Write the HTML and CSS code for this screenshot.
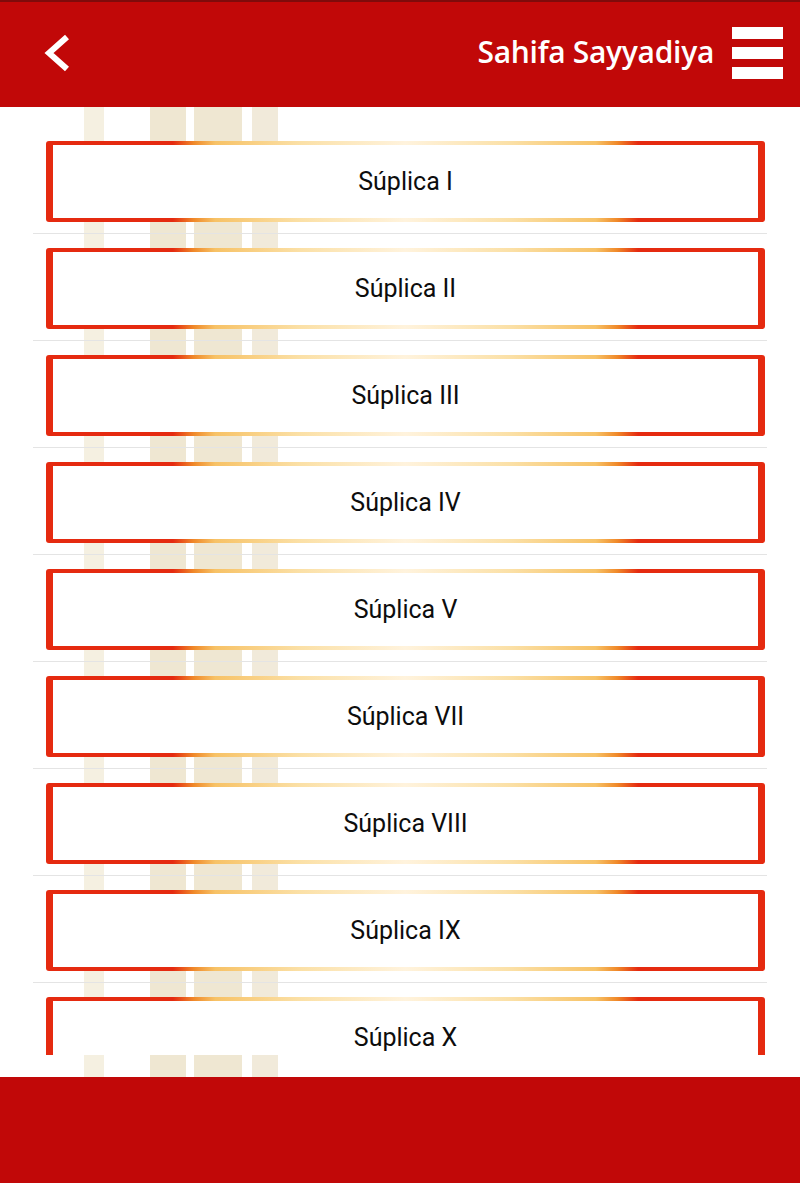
FILE: index.html
```html
<!DOCTYPE html>
<html lang="es">
<head>
    <meta charset="UTF-8">
    <meta name="viewport" content="width=device-width, initial-scale=1.0">
    <title>Sahifa Sayyadiya</title>
    <link rel="stylesheet" href="styles.css">
</head>
<body>
    <header class="app-bar">
        <a class="back-btn" href="#">
            <svg width="28" height="40" viewBox="0 0 28 40">
                <polyline points="23,4 5,20 23,36" fill="none" stroke="#fff" stroke-width="6"/>
            </svg>
        </a>
        <h1 class="app-title">Sahifa Sayyadiya</h1>
        <a class="menu-btn" href="#">
            <span></span>
            <span></span>
            <span></span>
        </a>
    </header>

    <main class="content">
        <ul class="chapter-list">
            <li class="chapter-row"><a class="chapter-card" href="#">Súplica I</a></li>
            <li class="chapter-row"><a class="chapter-card" href="#">Súplica II</a></li>
            <li class="chapter-row"><a class="chapter-card" href="#">Súplica III</a></li>
            <li class="chapter-row"><a class="chapter-card" href="#">Súplica IV</a></li>
            <li class="chapter-row"><a class="chapter-card" href="#">Súplica V</a></li>
            <li class="chapter-row"><a class="chapter-card" href="#">Súplica VII</a></li>
            <li class="chapter-row"><a class="chapter-card" href="#">Súplica VIII</a></li>
            <li class="chapter-row"><a class="chapter-card" href="#">Súplica IX</a></li>
            <li class="chapter-row"><a class="chapter-card" href="#">Súplica X</a></li>
        </ul>
    </main>

    <footer class="app-footer"></footer>
</body>
</html>
```

FILE: styles.css
```css
/* página completa */
body {
    margin: 0;
    height: 1183px;
    display: flex;
    flex-direction: column;
    background: #fff;
    font-family: Roboto, "Liberation Sans", sans-serif;
    overflow: hidden;
}

/* barra superior */
.app-bar {
    height: 105px;
    flex: none;
    display: flex;
    align-items: center;
    padding: 0 17px 0 44px;
    background: #c10808;
    border-top: 2px solid #7e0b0b;
}

.back-btn {
    display: flex;
    margin-top: -4px;
}

.app-title {
    margin: -6px 18px 0 auto;
    color: #fff;
    font-family: "Open Sans", "Liberation Sans", sans-serif;
    font-size: 30px;
    font-weight: 600;
    letter-spacing: -0.3px;
}

.menu-btn {
    display: flex;
    flex-direction: column;
    gap: 8px;
    margin-top: -3px;
}

.menu-btn span {
    display: block;
    width: 51px;
    height: 12px;
    background: #fff;
}

/* contenido con marca de agua */
.content {
    flex: 1;
    min-height: 0;
    padding-bottom: 22px;
    display: flex;
    flex-direction: column;
    background:
        linear-gradient(90deg,
            transparent 84px, #f5f0e1 84px, #f5f0e1 104px,
            transparent 104px, transparent 150px, #efe7d2 150px, #efe7d2 186px,
            transparent 186px, transparent 194px, #efe7d2 194px, #efe7d2 242px,
            transparent 242px, transparent 252px, #f1eada 252px, #f1eada 278px,
            transparent 278px);
}

.chapter-list {
    list-style: none;
    margin: 0;
    padding: 20px 0 0;
    flex: 1;
    min-height: 0;
    overflow: hidden;
}

.chapter-row {
    margin: 0 33px;
    padding: 14px 2px 11px 13px;
    border-bottom: 1px solid #e4e4e4;
}

/* tarjeta con borde degradado */
.chapter-card {
    height: 73px;
    display: flex;
    align-items: center;
    justify-content: center;
    border-left: 7px solid #e52a10;
    border-right: 7px solid #e52a10;
    border-radius: 3px;
    padding: 4px 0;
    color: #0d0d0d;
    font-size: 25px;
    text-decoration: none;
    background:
        linear-gradient(90deg, #e52a10 0, #e52a10 17%, #f08a2a 20%, #f7c266 23%, #fbe0a6 35%, #fff3dd 50%, #fbe0a6 65%, #f7c266 77%, #f08a2a 80%, #e52a10 83%, #e52a10 100%) top / 100% 4px no-repeat,
        linear-gradient(90deg, #e52a10 0, #e52a10 17%, #f08a2a 20%, #f7c266 23%, #fbe0a6 35%, #fff3dd 50%, #fbe0a6 65%, #f7c266 77%, #f08a2a 80%, #e52a10 83%, #e52a10 100%) bottom / 100% 4px no-repeat,
        #fff;
}

/* barra inferior */
.app-footer {
    height: 106px;
    flex: none;
    background: #c10808;
}
```
